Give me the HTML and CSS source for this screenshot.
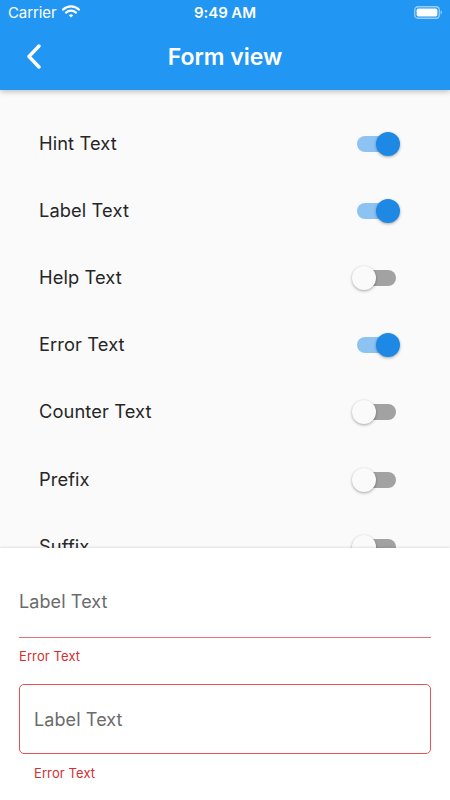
FILE: index.html
```html
<!DOCTYPE html>
<html>
<head>
<meta charset="utf-8">
<link rel="stylesheet" href="styles.css">
</head>
<body>
<div class="screen">
  <header class="appbar">
    <div class="status">
      <div class="status-left">
        <span class="carrier">Carrier</span>
        <svg class="wifi" width="18" height="13" viewBox="0 0 18 13">
          <path d="M1 4.6 A11.5 11.5 0 0 1 17 4.6" fill="none" stroke="#fff" stroke-width="2.2" stroke-linecap="round"/>
          <path d="M4 7.6 A7.2 7.2 0 0 1 14 7.6" fill="none" stroke="#fff" stroke-width="2.2" stroke-linecap="round"/>
          <path d="M6.9 10.4 L9 12.6 L11.1 10.4 A3 3 0 0 0 6.9 10.4 Z" fill="#fff"/>
        </svg>
      </div>
      <span class="time">9:49 AM</span>
      <div class="status-right">
        <svg class="battery" width="28" height="13" viewBox="0 0 28 13">
          <rect x="0.75" y="0.75" width="24.5" height="11.5" rx="3" fill="none" stroke="#fff" stroke-opacity="0.55" stroke-width="1.3"/>
          <rect x="2.6" y="2.6" width="20.8" height="7.8" rx="1.6" fill="#fff"/>
          <path d="M26.6 4.6 Q28 5 28 6.5 Q28 8 26.6 8.4 Z" fill="#fff" fill-opacity="0.55"/>
        </svg>
      </div>
    </div>
    <div class="toolbar">
      <svg class="back" width="20" height="26" viewBox="0 0 20 26">
        <polyline points="13,2 3,12.5 13,23" fill="none" stroke="#fff" stroke-width="3.4" stroke-linecap="round" stroke-linejoin="round"/>
      </svg>
      <h1 class="title">Form view</h1>
    </div>
  </header>

  <main class="list">
    <div class="row"><span class="label">Hint Text</span><span class="switch on"></span></div>
    <div class="row"><span class="label">Label Text</span><span class="switch on"></span></div>
    <div class="row"><span class="label">Help Text</span><span class="switch"></span></div>
    <div class="row"><span class="label">Error Text</span><span class="switch on"></span></div>
    <div class="row"><span class="label">Counter Text</span><span class="switch"></span></div>
    <div class="row"><span class="label">Prefix</span><span class="switch"></span></div>
    <div class="row"><span class="label">Suffix</span><span class="switch"></span></div>
  </main>

  <section class="panel">
    <div class="field underline-field">
      <div class="input-line"><span class="hint">Label Text</span></div>
      <div class="error">Error Text</div>
    </div>
    <div class="field outline-field">
      <div class="input-box"><span class="hint">Label Text</span></div>
      <div class="error">Error Text</div>
    </div>
  </section>
</div>
</body>
</html>
```

FILE: styles.css
```css
* { box-sizing: border-box; }
html, body { margin: 0; padding: 0; }
body {
  width: 450px;
  height: 800px;
  overflow: hidden;
  font-family: Inter, Roboto, "Liberation Sans", sans-serif;
  background: #fafafa;
}
.screen {
  display: flex;
  flex-direction: column;
  height: 800px;
}
.appbar {
  background: #2196f3;
  color: #fff;
  height: 90px;
  flex: none;
  position: relative;
  z-index: 2;
  box-shadow: 0 2px 5px rgba(0,0,0,0.22);
}
.status {
  height: 24px;
  display: flex;
  align-items: center;
  justify-content: space-between;
  padding: 0 8px 0 8px;
}
.status-left { display: flex; align-items: center; gap: 6px; width: 120px; }
.carrier { font-size: 15px; letter-spacing: -0.1px; }
.wifi { margin-top: -1px; }
.time {
  font-size: 15px;
  font-weight: 600;
  letter-spacing: -0.1px;
}
.status-right { width: 120px; display: flex; justify-content: flex-end; }
.toolbar {
  height: 66px;
  display: flex;
  align-items: center;
  position: relative;
  padding-left: 26px;
}
.back { flex: none; }
.title {
  position: absolute;
  left: 0; right: 0;
  top: 0; bottom: 0;
  margin: 0;
  display: flex;
  align-items: center;
  justify-content: center;
  font-size: 23px;
  font-weight: 600;
  letter-spacing: 0;
  pointer-events: none;
}
.list {
  flex: 1;
  overflow: hidden;
  padding-top: 19px;
  background: #fafafa;
}
.row {
  height: 67.2px;
  display: flex;
  align-items: center;
  justify-content: space-between;
  padding: 0 50px 0 39px;
}
.label {
  font-size: 18.3px;
  color: #262626;
  letter-spacing: 0.1px;
}
.switch {
  position: relative;
  width: 48px;
  height: 24px;
  margin-top: 2px;
  flex: none;
}
.switch::before {
  content: "";
  position: absolute;
  left: 5px;
  top: 4px;
  width: 39px;
  height: 16px;
  border-radius: 8px;
  background: #a2a2a2;
}
.switch::after {
  content: "";
  position: absolute;
  left: 0;
  top: 0;
  width: 24px;
  height: 24px;
  border-radius: 50%;
  background: #fafafa;
  box-shadow: 0 1px 3px rgba(0,0,0,0.35);
}
.switch.on::before { background: #8cc3f3; }
.switch.on::after { left: 24px; background: #1e88e5; }
.panel {
  flex: none;
  height: 252px;
  background: #fff;
  position: relative;
  z-index: 1;
  box-shadow: 0 -1px 2px rgba(0,0,0,0.10);
  padding: 0 19px;
  display: flex;
  flex-direction: column;
}
.field { display: flex; flex-direction: column; }
.input-line {
  height: 90px;
  display: flex;
  align-items: center;
  padding-top: 17px;
  border-bottom: 1.2px solid #e57373;
}
.hint {
  font-size: 18px;
  color: #6b6b6b;
  letter-spacing: 0.1px;
}
.error {
  font-size: 13px;
  color: #d32f2f;
  line-height: 18px;
  letter-spacing: 0.1px;
}
.underline-field .error { margin-top: 9px; }
.outline-field { margin-top: 19px; }
.input-box {
  height: 70px;
  border: 1.2px solid #e35454;
  border-radius: 5px;
  padding: 0 14px;
  display: flex;
  align-items: center;
}
.outline-field .error { margin-top: 10px; padding-left: 15px; }
```
